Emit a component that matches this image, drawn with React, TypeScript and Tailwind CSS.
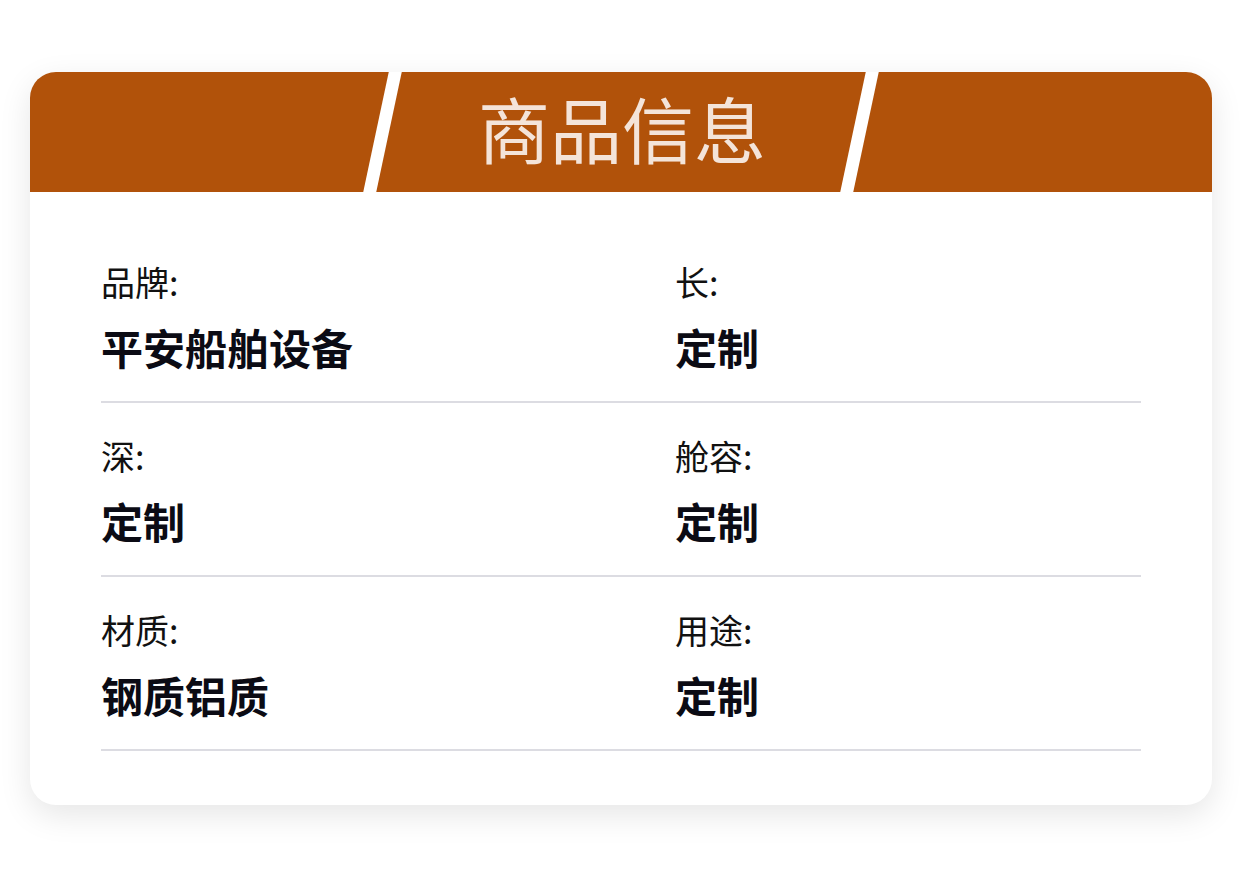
const ITEMS: [string, string][][] = [
  [
    ["品牌:", "平安船舶设备"],
    ["长:", "定制"],
  ],
  [
    ["深:", "定制"],
    ["舱容:", "定制"],
  ],
  [
    ["材质:", "钢质铝质"],
    ["用途:", "定制"],
  ],
];

export default function App() {
  return (
    <div
      className="min-h-[877px] bg-white pt-[72px] px-[30px]"
      style={{ fontFamily: '"Noto Sans CJK SC", "Noto Sans", sans-serif' }}
    >
      <div className="rounded-[26px] overflow-hidden bg-white shadow-[0_10px_32px_rgba(0,0,0,0.10)]">
        {/* header */}
        <div className="h-[120px] bg-[#b1520a] flex justify-center">
          <div className="w-[490px] -skew-x-12 border-x-[13px] border-white flex items-center justify-center pb-[10px]">
            <span className="skew-x-12 text-[72px] leading-none text-[#f4e4d9]">
              商品信息
            </span>
          </div>
        </div>

        {/* body */}
        <div className="pt-[37px] pb-[54px] px-[71px]">
          {ITEMS.map((row, i) => (
            <div
              key={i}
              className="grid grid-cols-[574px_1fr] pt-[33px] pb-[29px] border-b-2 border-[#dcdce2]"
            >
              {row.map(([label, value]) => (
                <div key={label} className="flex flex-col">
                  <div className="h-[40px] leading-[40px] text-[34px] text-[#111]">
                    {label}
                  </div>
                  <div className="mt-[20px] h-[50px] leading-[50px] text-[42px] font-bold text-[#0b0b14]">
                    {value}
                  </div>
                </div>
              ))}
            </div>
          ))}
        </div>
      </div>
    </div>
  );
}
